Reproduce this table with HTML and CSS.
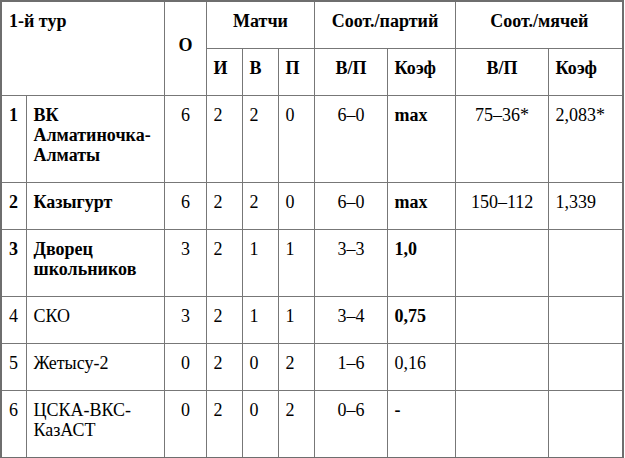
FILE: index.html
```html
<!DOCTYPE html>
<html>
<head>
<meta charset="utf-8">
<title>1-й тур</title>
<link rel="stylesheet" href="styles.css">
</head>
<body>
<table class="standings">
  <colgroup>
    <col class="c-pos"><col class="c-name"><col class="c-pts">
    <col class="c-m"><col class="c-m"><col class="c-m">
    <col class="c-sp"><col class="c-sk"><col class="c-bp"><col class="c-bk">
  </colgroup>
  <thead>
    <tr>
      <th class="top" colspan="2" rowspan="2">1-й тур</th>
      <th class="ctr" rowspan="2">О</th>
      <th class="ctr" colspan="3">Матчи</th>
      <th class="ctr" colspan="2">Соот./партий</th>
      <th class="ctr" colspan="2">Соот./мячей</th>
    </tr>
    <tr>
      <th>И</th><th>В</th><th>П</th>
      <th class="ctr">В/П</th><th>Коэф</th>
      <th class="ctr">В/П</th><th>Коэф</th>
    </tr>
  </thead>
  <tbody>
    <tr>
      <td class="b">1</td><td class="b">ВК Алматиночка-Алматы</td><td class="ctr">6</td>
      <td>2</td><td>2</td><td>0</td>
      <td class="ctr">6–0</td><td class="b">max</td>
      <td class="ctr">75–36*</td><td>2,083*</td>
    </tr>
    <tr>
      <td class="b">2</td><td class="b">Казыгурт</td><td class="ctr">6</td>
      <td>2</td><td>2</td><td>0</td>
      <td class="ctr">6–0</td><td class="b">max</td>
      <td class="ctr">150–112</td><td>1,339</td>
    </tr>
    <tr>
      <td class="b">3</td><td class="b">Дворец школьников</td><td class="ctr">3</td>
      <td>2</td><td>1</td><td>1</td>
      <td class="ctr">3–3</td><td class="b">1,0</td>
      <td></td><td></td>
    </tr>
    <tr>
      <td>4</td><td>СКО</td><td class="ctr">3</td>
      <td>2</td><td>1</td><td>1</td>
      <td class="ctr">3–4</td><td class="b">0,75</td>
      <td></td><td></td>
    </tr>
    <tr>
      <td>5</td><td>Жетысу-2</td><td class="ctr">0</td>
      <td>2</td><td>0</td><td>2</td>
      <td class="ctr">1–6</td><td>0,16</td>
      <td></td><td></td>
    </tr>
    <tr>
      <td>6</td><td>ЦСКА-ВКС-КазАСТ</td><td class="ctr">0</td>
      <td>2</td><td>0</td><td>2</td>
      <td class="ctr">0–6</td><td class="b">-</td>
      <td></td><td></td>
    </tr>
  </tbody>
</table>
</body>
</html>
```
FILE: styles.css
```css
html, body {
  margin: 0;
  padding: 0;
  background: #fff;
}
body {
  font-family: "Liberation Serif", serif;
  font-size: 18px;
  line-height: 20px;
  color: #000;
}
.standings {
  font-family: "Liberation Serif", serif;
  font-size: 18px;
  border-collapse: collapse;
  table-layout: fixed;
  width: 623px;
  border: 2px solid #6e6e6e;
}
.c-pos { width: 25px; }
.c-name { width: 138px; }
.c-pts { width: 42px; }
.c-m { width: 36px; }
.c-sp { width: 73px; }
.c-sk { width: 68px; }
.c-bp { width: 93px; }
.c-bk { width: 75px; }
.standings th,
.standings td {
  border: 1px solid #777;
  padding: 9px 6px 17px 7px;
  text-align: left;
  vertical-align: top;
  font-weight: normal;
}
.standings th {
  font-weight: bold;
}
.standings th[rowspan] {
  vertical-align: middle;
}
.standings th.top {
  vertical-align: top;
}
.standings .ctr {
  text-align: center;
}
.standings .b {
  font-weight: bold;
}
```
